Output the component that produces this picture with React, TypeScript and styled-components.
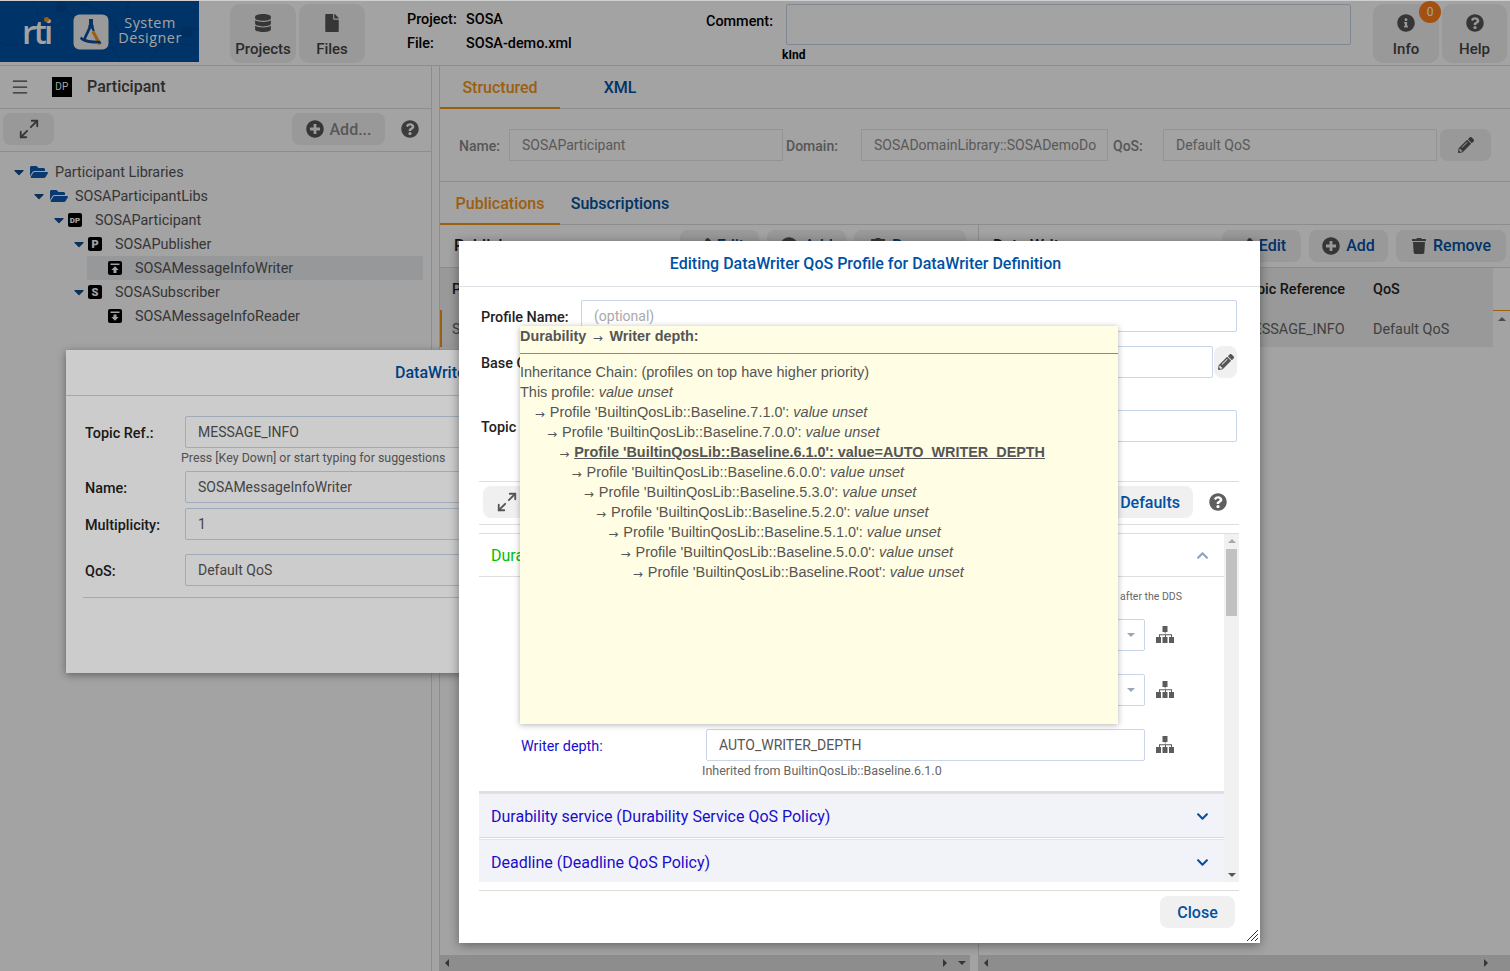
import React from 'react'
import styled, { createGlobalStyle } from 'styled-components'
import {
  FaCaretDown,
  FaChevronDown,
  FaChevronUp,
  FaDatabase,
  FaFile,
  FaFolderOpen,
  FaInfoCircle,
  FaPencilAlt,
  FaPlusCircle,
  FaQuestionCircle,
  FaTrash
} from 'react-icons/fa'
import { Maximize2, Menu } from 'lucide-react'

const BLUE = '#0051a3'
const ORANGE = '#f59518'
const LINE = '#dedede'

const GlobalStyle = createGlobalStyle`
  html, body { margin: 0; padding: 0; background: #fff; }
  body { font-family: Roboto, "Liberation Sans", sans-serif; font-size: 14.4px; color: #333; }
  * { box-sizing: border-box; }
`

const Page = styled.div`
  position: relative;
  width: 1510px;
  height: 971px;
  overflow: hidden;
  display: flex;
  flex-direction: column;
  background: #fff;
`

const TopEdge = styled.div`
  position: absolute;
  z-index: 9;
  top: 0;
  left: 0;
  right: 0;
  height: 1px;
  background: #cfcfcf;
`

/* header */
const Header = styled.header`
  height: 66px;
  flex: none;
  display: flex;
  align-items: flex-start;
  border-bottom: 1px solid ${LINE};
`

const Logo = styled.div`
  position: relative;
  width: 199px;
  height: 61px;
  margin-top: 1px;
  background: #0051a3;
  overflow: hidden;
  display: flex;
  align-items: center;
  flex: none;
`

const LogoCurves = styled.svg`
  position: absolute;
  inset: 0;
`

const RtiMark = styled.div`
  position: relative;
  margin-left: 22px;
  width: 30px;
  color: #fff;
  font: 600 33px/1 "Open Sans", Roboto, sans-serif;
  letter-spacing: -2.6px;
`

const RtiDot = styled.span`
  position: absolute;
  top: 2px;
  right: 3px;
  width: 5px;
  height: 5px;
  border-radius: 50%;
  background: ${ORANGE};
`

const LogoBadge = styled.svg`
  position: relative;
  margin-left: 21px;
  flex: none;
`

const LogoText = styled.div`
  position: relative;
  margin: -3px 0 0 9px;
  width: 64px;
  color: #fff;
  text-align: center;
  font: 400 14.4px/15px "Open Sans", sans-serif;
  letter-spacing: 0.5px;
  white-space: nowrap;
`

const HeaderButton = styled.div<{ $ml?: number; $w?: number }>`
  width: ${(p) => p.$w ?? 66}px;
  height: 59px;
  margin-top: 4px;
  margin-left: ${(p) => p.$ml ?? 3}px;
  background: #f0f0f0;
  border-radius: 10px;
  color: #444;
  font-size: 15px;
  font-weight: 500;
  display: flex;
  flex-direction: column;
  align-items: center;
  padding-top: 10px;
  position: relative;
  flex: none;
  svg { font-size: 18px; height: 18px; margin-bottom: 8px; color: #555; }
`

const DatabaseIcon = styled(FaDatabase)`
  && { font-size: 16px; }
`

const Badge = styled.span`
  position: absolute;
  top: -3px;
  right: -2px;
  width: 22px;
  height: 22px;
  border-radius: 50%;
  background: #ff7f1e;
  color: #fff;
  font-size: 12px;
  font-weight: 400;
  display: flex;
  align-items: center;
  justify-content: center;
`

const ProjectInfo = styled.div`
  width: 299px;
  margin-left: 42px;
  margin-top: 7px;
  flex: none;
  display: grid;
  grid-template-columns: 59px auto;
  grid-auto-rows: 24px;
  align-items: center;
  color: #000;
  font-weight: 500;
`

const CommentLabel = styled.div`
  width: 80px;
  margin-top: 13px;
  flex: none;
  color: #000;
  font-weight: 500;
`

const CommentBlock = styled.div`
  width: 565px;
  flex: none;
  margin-top: 4px;
`

const CommentBox = styled.div`
  height: 41px;
  background: #fff;
  border: 1px solid #c8d6e8;
  border-radius: 2px;
`

const KindText = styled.div`
  margin: 4px 0 0 -4px;
  color: #000;
  font-size: 12px;
  font-weight: 700;
  line-height: 13px;
`

/* main */
const Main = styled.div`
  flex: 1;
  display: flex;
  min-height: 0;
`

const LeftPanel = styled.aside`
  width: 432px;
  flex: none;
  border-right: 1px solid ${LINE};
  display: flex;
  flex-direction: column;
`

const PanelTitle = styled.div`
  height: 43px;
  flex: none;
  display: flex;
  align-items: center;
  padding: 0 0 1px 10px;
  border-bottom: 1px solid ${LINE};
  color: #444;
  font-size: 16px;
  font-weight: 500;
  > svg { flex: none; color: #444; }
`

const DpLarge = styled.span`
  width: 20px;
  height: 20px;
  margin: 0 15px 0 22px;
  background: #000;
  color: #fff;
  font-size: 10px;
  font-weight: 400;
  letter-spacing: 0.4px;
  display: flex;
  align-items: center;
  justify-content: center;
`

const TreeToolbar = styled.div`
  height: 43px;
  flex: none;
  display: flex;
  align-items: center;
  padding: 0 12px 2px 3px;
  border-bottom: 1px solid ${LINE};
`

const ToolButton = styled.div<{ $w: number; $color?: string }>`
  width: ${(p) => p.$w}px;
  height: 32px;
  flex: none;
  background: #f0f0f0;
  border-radius: 8px;
  color: ${(p) => (p.$color ? p.$color : BLUE)};
  font-size: 16px;
  font-weight: 500;
  display: flex;
  align-items: center;
  justify-content: center;
  gap: 6px;
  svg { font-size: 18px; color: #555; flex: none; }
`

const SmallToolIcon = styled(FaTrash)`
  && { font-size: 16px; }
`

const PenIcon = styled(FaPencilAlt)`
  && { font-size: 16px; }
`

const AddButton = styled(ToolButton)`
  margin-left: auto;
  margin-right: 16px;
`

const HelpIcon = styled(FaQuestionCircle)`
  flex: none;
  font-size: 18px;
  color: #5f5f5f;
`

const Spacer = styled.div`
  flex: 1;
`

const Tree = styled.ul`
  list-style: none;
  margin: 0;
  padding: 8px 8px 0 0;
`

const TreeRow = styled.li<{ $level: number; $selected?: boolean }>`
  height: 24px;
  display: flex;
  align-items: center;
  margin-left: ${(p) => (p.$selected ? 87 : 0)}px;
  padding-left: ${(p) => (p.$selected ? 21 : 14 + p.$level * 20)}px;
  background: ${(p) => (p.$selected ? '#eceef2' : 'transparent')};
  color: #555;
`

const Caret = styled(FaCaretDown)<{ $tight?: boolean }>`
  width: 10px;
  flex: none;
  margin-right: ${(p) => (p.$tight ? 4 : 6)}px;
  color: #0d4b8c;
  font-size: 16px;
`

const CaretGap = styled.span`
  width: 14px;
  flex: none;
`

const FolderIcon = styled(FaFolderOpen)`
  flex: none;
  margin-right: 7px;
  color: #0d5cb0;
  font-size: 18px;
`

const TypeIcon = styled.span<{ $size: number }>`
  width: 14px;
  height: 14px;
  flex: none;
  margin-right: 13px;
  background: #000;
  border-radius: 2px;
  color: #fff;
  font-size: ${(p) => p.$size}px;
  font-weight: 900;
  display: flex;
  align-items: center;
  justify-content: center;
`

const ArrowBox = styled.svg`
  flex: none;
  margin-right: 13px;
`

const Gutter = styled.div`
  width: 7px;
  flex: none;
`

const RightPanel = styled.section`
  flex: 1;
  min-width: 0;
  display: flex;
  flex-direction: column;
  border-left: 1px solid ${LINE};
`

const TabBar = styled.div`
  height: 43px;
  flex: none;
  display: flex;
  border-bottom: 1px solid ${LINE};
`

const Tab = styled.div<{ $active?: boolean; $w: number }>`
  width: ${(p) => p.$w}px;
  height: 43px;
  flex: none;
  display: flex;
  align-items: center;
  justify-content: center;
  padding-top: 2px;
  color: ${(p) => (p.$active ? ORANGE : BLUE)};
  border-bottom: 2px solid ${(p) => (p.$active ? ORANGE : 'transparent')};
  font-size: 16px;
  font-weight: 500;
`

const ElementForm = styled.div`
  height: 73px;
  flex: none;
  display: flex;
  align-items: center;
  padding-left: 19px;
  border-bottom: 1px solid ${LINE};
  color: #888;
  font-size: 14px;
  font-weight: 500;
`

const FormLabel = styled.span<{ $w: number; $pl?: number }>`
  width: ${(p) => p.$w}px;
  padding: 2px 0 0 ${(p) => p.$pl ?? 0}px;
  flex: none;
`

const DisabledInput = styled.div<{ $w: number }>`
  width: ${(p) => p.$w}px;
  height: 32px;
  flex: none;
  padding-left: 12px;
  border: 1px solid #e8e8e8;
  color: #8d8d8d;
  font-weight: 400;
  display: flex;
  align-items: center;
  white-space: nowrap;
  overflow: hidden;
`

const EditButton = styled(ToolButton)`
  margin-left: 3px;
`

const Panes = styled.div`
  flex: 1;
  display: flex;
  min-height: 0;
`

const Pane = styled.div<{ $w?: number }>`
  position: relative;
  width: ${(p) => (p.$w ? `${p.$w}px` : 'auto')};
  flex: ${(p) => (p.$w ? 'none' : 1)};
  min-width: 0;
  display: flex;
  flex-direction: column;
  & + & { margin-left: 8px; border-left: 1px solid ${LINE}; }
`

const PaneToolbar = styled.div`
  height: 43px;
  flex: none;
  display: flex;
  align-items: center;
  gap: 8px;
  padding: 0 4px 1px 14px;
  border-bottom: 1px solid ${LINE};
`

const PaneTitle = styled.div`
  flex: 1;
  color: #222;
  font-size: 16px;
  font-weight: 500;
`

const TableArea = styled.div`
  flex: 1;
  display: flex;
  min-height: 0;
`

const TableBody = styled.div`
  flex: 1;
  min-width: 0;
`

const TableRow = styled.div<{ $head?: boolean; $cols: string }>`
  height: ${(p) => (p.$head ? 42 : 37)}px;
  display: grid;
  grid-template-columns: ${(p) => p.$cols};
  align-items: center;
  background: #f0f0f0;
  color: ${(p) => (p.$head ? '#222' : '#666')};
  font-weight: ${(p) => (p.$head ? 500 : 400)};
  border-left: 2px solid ${(p) => (p.$head ? 'transparent' : ORANGE)};
  padding: ${(p) => (p.$head ? 0 : 2)}px 0 0 10px;
  white-space: nowrap;
`

const VerticalBar = styled.div`
  width: 17px;
  flex: none;
  padding-top: 42px;
`

const VerticalTrack = styled.div`
  height: 100%;
  border-top: 1px solid ${ORANGE};
  padding-top: 6px;
  display: flex;
  justify-content: center;
`

const HorizontalBar = styled.div`
  height: 16px;
  flex: none;
  background: #dedede;
  display: flex;
  align-items: center;
  padding: 0 4px 0 5px;
`

const Triangle = styled.span<{ $dir: 'up' | 'down' | 'left' | 'right'; $color?: string }>`
  width: 0;
  height: 0;
  flex: none;
  border: 4px solid transparent;
  ${(p) =>
    ({
      up: 'border-top-width: 0; border-bottom-color: ',
      down: 'border-bottom-width: 0; border-top-color: ',
      left: 'border-left-width: 0; border-right-color: ',
      right: 'border-right-width: 0; border-left-color: '
    })[p.$dir]}${(p) => p.$color ?? '#555'};
`

const BarEndArrow = styled.span<{ $mr: number }>`
  margin-left: auto;
  margin-right: ${(p) => p.$mr}px;
  display: flex;
`

/* dialogs */
const Backdrop = styled.div<{ $z: number }>`
  position: absolute;
  inset: 0;
  z-index: ${(p) => p.$z};
  background: rgba(0, 0, 0, 0.2);
`

const WriterDialog = styled.div`
  position: absolute;
  z-index: 2;
  left: 66px;
  top: 350px;
  width: 800px;
  height: 323px;
  background: #fff;
  box-shadow: 0 2px 8px rgba(0, 0, 0, 0.4);
`

const WriterTitle = styled.div`
  height: 46px;
  border-bottom: 1px solid #ccd4e0;
  display: flex;
  align-items: center;
  padding-left: 329px;
  color: ${BLUE};
  font-size: 16px;
  font-weight: 500;
`

const WriterBody = styled.div`
  padding: 20px 17px 0 19px;
`

const WriterRow = styled.div<{ $mb?: number }>`
  display: flex;
  align-items: center;
  margin-bottom: ${(p) => p.$mb ?? 0}px;
  color: #222;
  font-weight: 500;
`

const WriterLabel = styled.span`
  width: 100px;
  padding-top: 2px;
  flex: none;
`

const Field = styled.div<{ $w?: number; $grow?: boolean }>`
  width: ${(p) => (p.$w ? `${p.$w}px` : 'auto')};
  flex: ${(p) => (p.$grow ? 1 : 'none')};
  height: 32px;
  min-width: 0;
  padding-left: 12px;
  background: #fff;
  border: 1px solid #c8d6e8;
  border-radius: 2px;
  color: #555;
  font-size: 14px;
  font-weight: 400;
  display: flex;
  align-items: center;
  white-space: nowrap;
`

const FieldHint = styled.div`
  margin: 2px 0 5px 96px;
  height: 16px;
  color: #666;
  font-size: 12.4px;
  line-height: 16px;
  white-space: nowrap;
`

const WriterRule = styled.div`
  margin: 11px 0 0 -2px;
  border-top: 1px solid #ccd4e0;
`

const QosDialog = styled.div`
  position: absolute;
  z-index: 4;
  left: 459px;
  top: 241px;
  width: 801px;
  height: 702px;
  background: #fff;
  box-shadow: 0 2px 10px rgba(0, 0, 0, 0.4);
  display: flex;
  flex-direction: column;
`

const QosTitle = styled.div`
  height: 46px;
  flex: none;
  display: flex;
  align-items: center;
  justify-content: center;
  padding-left: 12px;
  border-bottom: 1px solid #dfe3e8;
  color: ${BLUE};
  font-size: 16px;
  font-weight: 500;
`

const QosBody = styled.div`
  padding: 13px 21px 0 20px;
  flex: 1;
  min-height: 0;
  display: flex;
  flex-direction: column;
`

const QosRow = styled.div<{ $mb: number }>`
  display: flex;
  align-items: center;
  flex: none;
  padding-right: 2px;
  margin-bottom: ${(p) => p.$mb}px;
  color: #222;
  font-weight: 500;
`

const QosLabel = styled.span`
  width: 102px;
  flex: none;
  padding: 2px 0 0 2px;
  white-space: nowrap;
`

const Placeholder = styled.span`
  color: #a9a9a9;
`

const PencilButton = styled.div`
  width: 23px;
  height: 32px;
  margin-left: 1px;
  flex: none;
  background: #f0f0f0;
  border-radius: 8px;
  display: flex;
  align-items: center;
  justify-content: center;
  color: #555;
  font-size: 16px;
`

const QosToolbar = styled.div`
  height: 44px;
  flex: none;
  display: flex;
  align-items: center;
  padding: 0 12px 2px 4px;
  border-top: 1px solid ${LINE};
  border-bottom: 1px solid ${LINE};
  margin-bottom: 8px;
`

const DefaultsButton = styled(ToolButton)`
  margin-right: 16px;
  justify-content: flex-end;
  padding-right: 13px;
`

const ScrollFrame = styled.div`
  height: 349px;
  flex: none;
  display: flex;
  border-top: 1px solid ${LINE};
`

const ScrollContent = styled.div`
  flex: 1;
  min-width: 0;
  overflow: hidden;
`

const OpenSection = styled.div`
  height: 259px;
  border-bottom: 2px solid ${LINE};
`

const OpenHead = styled.div`
  height: 43px;
  display: flex;
  align-items: center;
  justify-content: space-between;
  padding: 0 15px 0 12px;
  border-bottom: 1px solid ${LINE};
  color: #00c000;
  font-size: 16px;
  svg { color: #8aa2bd; font-size: 13px; }
`

const SmallHint = styled.div<{ $ml?: number }>`
  height: 14px;
  margin-left: ${(p) => p.$ml ?? 0}px;
  color: #666;
  font-size: 12.5px;
  line-height: 14px;
  white-space: nowrap;
`

const RightHint = styled(SmallHint)`
  margin-top: 13px;
  margin-bottom: 15px;
  padding-right: 42px;
  font-size: 10.5px;
  text-align: right;
`

const PolicyRow = styled.div<{ $mb?: number }>`
  display: flex;
  align-items: center;
  padding-left: 42px;
  margin-bottom: ${(p) => p.$mb ?? 0}px;
  color: #1a0dcc;
`

const PolicyLabel = styled.span`
  width: 185px;
  padding-top: 2px;
  flex: none;
`

const TreeGlyph = styled.svg`
  flex: none;
  margin: -2px 0 0 11px;
`

const SelectCaret = styled.span`
  margin-left: auto;
  margin-right: 9px;
  display: flex;
`

const ClosedSection = styled.div`
  height: 45px;
  margin-bottom: 1px;
  display: flex;
  align-items: center;
  justify-content: space-between;
  padding: 2px 15px 0 12px;
  background: #f2f3f8;
  border-top: 1px solid #e2e2e2;
  border-bottom: 1px solid #d8d8d8;
  color: #1a0dcc;
  font-size: 16px;
  svg { color: ${BLUE}; font-size: 13px; }
`

const QosScrollbar = styled.div`
  width: 15px;
  flex: none;
  background: #f1f1f1;
  display: flex;
  flex-direction: column;
  align-items: center;
  padding-top: 5px;
`

const QosThumb = styled.div`
  width: 11px;
  height: 67px;
  margin-top: 6px;
  background: #c1c1c1;
`

const QosBottomArrow = styled.div`
  margin-top: auto;
  margin-bottom: 5px;
  display: flex;
`

const QosFooter = styled.div`
  margin-top: 8px;
  height: 52px;
  flex: none;
  border-top: 1px solid ${LINE};
  display: flex;
  justify-content: flex-end;
  padding: 5px 4px 0 0;
`

const ResizeGrip = styled.svg`
  position: absolute;
  right: 1px;
  bottom: 1px;
`

/* tooltip */
const Tooltip = styled.div`
  position: absolute;
  z-index: 5;
  left: 520px;
  top: 326px;
  width: 598px;
  height: 398px;
  background: #fffde3;
  box-shadow: 0 1px 6px rgba(0, 0, 0, 0.3);
  font: 14.4px/20px "Liberation Sans", Arial, sans-serif;
  color: #555;
  white-space: nowrap;
`

const TipTitle = styled.div`
  height: 28px;
  font-weight: 700;
  border-bottom: 1px solid #8a8a8a;
  margin-bottom: 8px;
`

const TipArrow = styled.span`
  display: inline-block;
  width: 15px;
  font: 400 12px/1 "DejaVu Sans", sans-serif;
  vertical-align: -1px;
`

const TitleArrow = styled(TipArrow)`
  width: 17px;
  text-align: center;
  margin: 0 3px 0 3px;
`

const TipLine = styled.div<{ $level?: number; $strong?: boolean }>`
  height: 20px;
  padding-left: ${(p) => (p.$level ? 2.5 + p.$level * 12.25 : 0)}px;
  font-size: ${(p) => (p.$strong ? 14.4 : 14.48)}px;
  font-weight: ${(p) => (p.$strong ? 700 : 400)};
`

const Emph = styled.em`
  font-style: italic;
`

const Strong = styled.span`
  text-decoration: underline;
`

const chain = ['7.1.0', '7.0.0', '6.1.0', '6.0.0', '5.3.0', '5.2.0', '5.1.0', '5.0.0', 'Root']

const WriterGlyph = ({ down }: { down?: boolean }) => (
  <ArrowBox width="14" height="14" viewBox="0 0 14 14">
    <rect width="14" height="14" rx="2" fill="#000" />
    {down ? (
      <path d="M2.5 2.5h9V4h-9zM5.5 5.5h3V8h2.2L7 11.8 3.3 8h2.2z" fill="#fff" />
    ) : (
      <path d="M2.5 2.5h9V4h-9zM7 5.2L10.7 9H8.5v3h-3V9H3.3z" fill="#fff" />
    )}
  </ArrowBox>
)

const HierarchyIcon = () => (
  <TreeGlyph width="18" height="17" viewBox="0 0 18 17" fill="#5c5c5c">
    <rect x="6.5" y="0" width="5" height="6" />
    <rect x="0" y="11" width="5" height="6" />
    <rect x="6.5" y="11" width="5" height="6" />
    <rect x="13" y="11" width="5" height="6" />
    <path d="M8.5 6h1v2.2h6.5V11h-1V9.2h-5V11h-1V9.2h-5V11h-1V8.2h6.5z" />
  </TreeGlyph>
)

export default function App() {
  return (
    <Page>
      <GlobalStyle />
      <TopEdge />
      <Header>
        <Logo>
          <LogoCurves width="199" height="61" viewBox="0 0 199 61" fill="none" stroke="#004a95" strokeWidth="1.2">
            <circle cx="12" cy="18" r="26" />
            <circle cx="61" cy="6" r="5" fill="#004a95" />
            <circle cx="187" cy="31" r="5" fill="#004a95" />
            <path d="M60 0c10 24 50 30 60 61M130 0c-14 20 20 40 60 44M150 61c8-20 30-30 49-34M60 6c20-10 50 4 62 30" />
          </LogoCurves>
          <RtiMark>
            rti
            <RtiDot />
          </RtiMark>
          <LogoBadge width="36" height="36" viewBox="0 0 36 36">
            <rect x="0.5" y="0.5" width="35" height="35" rx="6" fill="#f2f2f2" />
            <rect x="16" y="5" width="4" height="6" fill="#0d4fa0" />
            <circle cx="18" cy="12" r="2.6" fill="#0d4fa0" />
            <path d="M17.5 12L10.5 27" stroke="#0d4fa0" strokeWidth="2.8" fill="none" />
            <path d="M19 12l1.6 5" stroke="#0d4fa0" strokeWidth="2.4" fill="none" />
            <path d="M20 17.5L27 30.5" stroke={ORANGE} strokeWidth="3.2" fill="none" />
            <path d="M8 22.5c4 3.5 10 4.2 19 4.2l1.5 2.6C19 30 11 29 7 25z" fill="#0d4fa0" />
          </LogoBadge>
          <LogoText>
            System
            <br />
            Designer
          </LogoText>
        </Logo>
        <HeaderButton $ml={31}>
          <DatabaseIcon />
          Projects
        </HeaderButton>
        <HeaderButton>
          <FaFile />
          Files
        </HeaderButton>
        <ProjectInfo>
          <span>Project:</span>
          <span>SOSA</span>
          <span>File:</span>
          <span>SOSA-demo.xml</span>
        </ProjectInfo>
        <CommentLabel>Comment:</CommentLabel>
        <CommentBlock>
          <CommentBox />
          <KindText>kInd</KindText>
        </CommentBlock>
        <HeaderButton $ml={22}>
          <FaInfoCircle />
          Info
          <Badge>0</Badge>
        </HeaderButton>
        <HeaderButton $w={65}>
          <FaQuestionCircle />
          Help
        </HeaderButton>
      </Header>

      <Main>
        <LeftPanel>
          <PanelTitle>
            <Menu size={20} strokeWidth={1.5} />
            <DpLarge>DP</DpLarge>
            Participant
          </PanelTitle>
          <TreeToolbar>
            <ToolButton $w={51}>
              <Maximize2 size={22} strokeWidth={2} />
            </ToolButton>
            <AddButton $w={93} $color="#8a8a8a">
              <FaPlusCircle />
              Add...
            </AddButton>
            <HelpIcon />
          </TreeToolbar>
          <Tree>
            <TreeRow $level={0}>
              <Caret />
              <FolderIcon />
              Participant Libraries
            </TreeRow>
            <TreeRow $level={1}>
              <Caret />
              <FolderIcon />
              SOSAParticipantLibs
            </TreeRow>
            <TreeRow $level={2}>
              <Caret $tight />
              <TypeIcon $size={8}>DP</TypeIcon>
              SOSAParticipant
            </TreeRow>
            <TreeRow $level={3}>
              <Caret $tight />
              <TypeIcon $size={11}>P</TypeIcon>
              SOSAPublisher
            </TreeRow>
            <TreeRow $level={4} $selected>
              <WriterGlyph />
              SOSAMessageInfoWriter
            </TreeRow>
            <TreeRow $level={3}>
              <Caret $tight />
              <TypeIcon $size={11}>S</TypeIcon>
              SOSASubscriber
            </TreeRow>
            <TreeRow $level={4}>
              <CaretGap />
              <WriterGlyph down />
              SOSAMessageInfoReader
            </TreeRow>
          </Tree>
        </LeftPanel>
        <Gutter />
        <RightPanel>
          <TabBar>
            <Tab $active $w={120}>
              Structured
            </Tab>
            <Tab $w={120}>XML</Tab>
          </TabBar>
          <ElementForm>
            <FormLabel $w={50}>Name:</FormLabel>
            <DisabledInput $w={274}>SOSAParticipant</DisabledInput>
            <FormLabel $w={78} $pl={3}>
              Domain:
            </FormLabel>
            <DisabledInput $w={247}>SOSADomainLibrary::SOSADemoDo</DisabledInput>
            <FormLabel $w={55} $pl={5}>
              QoS:
            </FormLabel>
            <DisabledInput $w={274}>Default QoS</DisabledInput>
            <EditButton $w={51}>
              <PenIcon />
            </EditButton>
          </ElementForm>
          <TabBar>
            <Tab $active $w={120}>
              Publications
            </Tab>
            <Tab $w={120}>Subscriptions</Tab>
          </TabBar>
          <Panes>
            <Pane $w={530}>
              <PaneToolbar>
                <PaneTitle>Publishers</PaneTitle>
                <ToolButton $w={79}>
                  <PenIcon />
                  Edit
                </ToolButton>
                <ToolButton $w={79}>
                  <FaPlusCircle />
                  Add
                </ToolButton>
                <ToolButton $w={112}>
                  <SmallToolIcon />
                  Remove
                </ToolButton>
              </PaneToolbar>
              <TableArea>
                <TableBody>
                  <TableRow $head $cols="1fr">
                    <span>Publisher</span>
                  </TableRow>
                  <TableRow $cols="1fr">
                    <span>SOSAPublisher</span>
                  </TableRow>
                </TableBody>
                <VerticalBar />
              </TableArea>
              <HorizontalBar>
                <Triangle $dir="left" />
                <BarEndArrow $mr={11}>
                  <Triangle $dir="right" />
                </BarEndArrow>
                <Triangle $dir="down" />
              </HorizontalBar>
            </Pane>
            <Pane>
              <PaneToolbar>
                <PaneTitle>Data Writers</PaneTitle>
                <ToolButton $w={79}>
                  <PenIcon />
                  Edit
                </ToolButton>
                <ToolButton $w={79}>
                  <FaPlusCircle />
                  Add
                </ToolButton>
                <ToolButton $w={110}>
                  <SmallToolIcon />
                  Remove
                </ToolButton>
              </PaneToolbar>
              <TableArea>
                <TableBody>
                  <TableRow $head $cols="250px 132px 1fr">
                    <span>Name</span>
                    <span>Topic Reference</span>
                    <span>QoS</span>
                  </TableRow>
                  <TableRow $cols="250px 132px 1fr">
                    <span>SOSAMessageInfoWriter</span>
                    <span>MESSAGE_INFO</span>
                    <span>Default QoS</span>
                  </TableRow>
                </TableBody>
                <VerticalBar>
                  <VerticalTrack>
                    <Triangle $dir="up" $color="#777" />
                  </VerticalTrack>
                </VerticalBar>
              </TableArea>
              <HorizontalBar>
                <Triangle $dir="left" />
                <BarEndArrow $mr={18}>
                  <Triangle $dir="right" />
                </BarEndArrow>
              </HorizontalBar>
            </Pane>
          </Panes>
        </RightPanel>
      </Main>

      <Backdrop $z={1} />
      <WriterDialog>
        <WriterTitle>DataWriter Definition</WriterTitle>
        <WriterBody>
          <WriterRow>
            <WriterLabel>Topic Ref.:</WriterLabel>
            <Field $grow>MESSAGE_INFO</Field>
          </WriterRow>
          <FieldHint>Press [Key Down] or start typing for suggestions</FieldHint>
          <WriterRow $mb={5}>
            <WriterLabel>Name:</WriterLabel>
            <Field $grow>SOSAMessageInfoWriter</Field>
          </WriterRow>
          <WriterRow $mb={14}>
            <WriterLabel>Multiplicity:</WriterLabel>
            <Field $grow>1</Field>
          </WriterRow>
          <WriterRow>
            <WriterLabel>QoS:</WriterLabel>
            <Field $grow>Default QoS</Field>
          </WriterRow>
          <WriterRule />
        </WriterBody>
      </WriterDialog>

      <Backdrop $z={3} />
      <QosDialog>
        <QosTitle>Editing DataWriter QoS Profile for DataWriter Definition</QosTitle>
        <QosBody>
          <QosRow $mb={14}>
            <QosLabel>Profile Name:</QosLabel>
            <Field $grow>
              <Placeholder>(optional)</Placeholder>
            </Field>
          </QosRow>
          <QosRow $mb={32}>
            <QosLabel>Base QoS Profile:</QosLabel>
            <Field $grow />
            <PencilButton>
              <FaPencilAlt />
            </PencilButton>
          </QosRow>
          <QosRow $mb={39}>
            <QosLabel>Topic Filter:</QosLabel>
            <Field $grow />
          </QosRow>
          <QosToolbar>
            <ToolButton $w={48}>
              <Maximize2 size={22} strokeWidth={2} />
            </ToolButton>
            <Spacer />
            <DefaultsButton $w={120}>Defaults</DefaultsButton>
            <HelpIcon />
          </QosToolbar>
          <ScrollFrame>
            <ScrollContent>
              <OpenSection>
                <OpenHead>
                  Durability (Durability QoS Policy)
                  <FaChevronUp />
                </OpenHead>
                <RightHint>after the DDS</RightHint>
                <PolicyRow $mb={23}>
                  <PolicyLabel />
                  <Field $w={439}>
                    <SelectCaret>
                      <Triangle $dir="down" $color="#9aa5b5" />
                    </SelectCaret>
                  </Field>
                  <HierarchyIcon />
                </PolicyRow>
                <PolicyRow $mb={23}>
                  <PolicyLabel />
                  <Field $w={439}>
                    <SelectCaret>
                      <Triangle $dir="down" $color="#9aa5b5" />
                    </SelectCaret>
                  </Field>
                  <HierarchyIcon />
                </PolicyRow>
                <PolicyRow $mb={3}>
                  <PolicyLabel>Writer depth:</PolicyLabel>
                  <Field $w={439}>AUTO_WRITER_DEPTH</Field>
                  <HierarchyIcon />
                </PolicyRow>
                <SmallHint $ml={223}>Inherited from BuiltinQosLib::Baseline.6.1.0</SmallHint>
              </OpenSection>
              <ClosedSection>
                Durability service (Durability Service QoS Policy)
                <FaChevronDown />
              </ClosedSection>
              <ClosedSection>
                Deadline (Deadline QoS Policy)
                <FaChevronDown />
              </ClosedSection>
            </ScrollContent>
            <QosScrollbar>
              <Triangle $dir="up" $color="#a8a8a8" />
              <QosThumb />
              <QosBottomArrow>
                <Triangle $dir="down" $color="#555" />
              </QosBottomArrow>
            </QosScrollbar>
          </ScrollFrame>
          <QosFooter>
            <ToolButton $w={75}>Close</ToolButton>
          </QosFooter>
        </QosBody>
        <ResizeGrip width="13" height="13" viewBox="0 0 13 13" stroke="#333" strokeWidth="1">
          <path d="M1 12L12 1M5 12l7-7M9 12l3-3" />
        </ResizeGrip>
      </QosDialog>

      <Tooltip>
        <TipTitle>
          Durability
          <TitleArrow>→</TitleArrow>
          Writer depth:
        </TipTitle>
        <TipLine>Inheritance Chain: (profiles on top have higher priority)</TipLine>
        <TipLine>
          This profile: <Emph>value unset</Emph>
        </TipLine>
        {chain.map((name, i) =>
          name === '6.1.0' ? (
            <TipLine key={name} $level={i + 1} $strong>
              <TipArrow>→</TipArrow>
              <Strong>Profile 'BuiltinQosLib::Baseline.6.1.0': value=AUTO_WRITER_DEPTH</Strong>
            </TipLine>
          ) : (
            <TipLine key={name} $level={i + 1}>
              <TipArrow>→</TipArrow>
              Profile 'BuiltinQosLib::Baseline.{name}': <Emph>value unset</Emph>
            </TipLine>
          )
        )}
      </Tooltip>
    </Page>
  )
}
